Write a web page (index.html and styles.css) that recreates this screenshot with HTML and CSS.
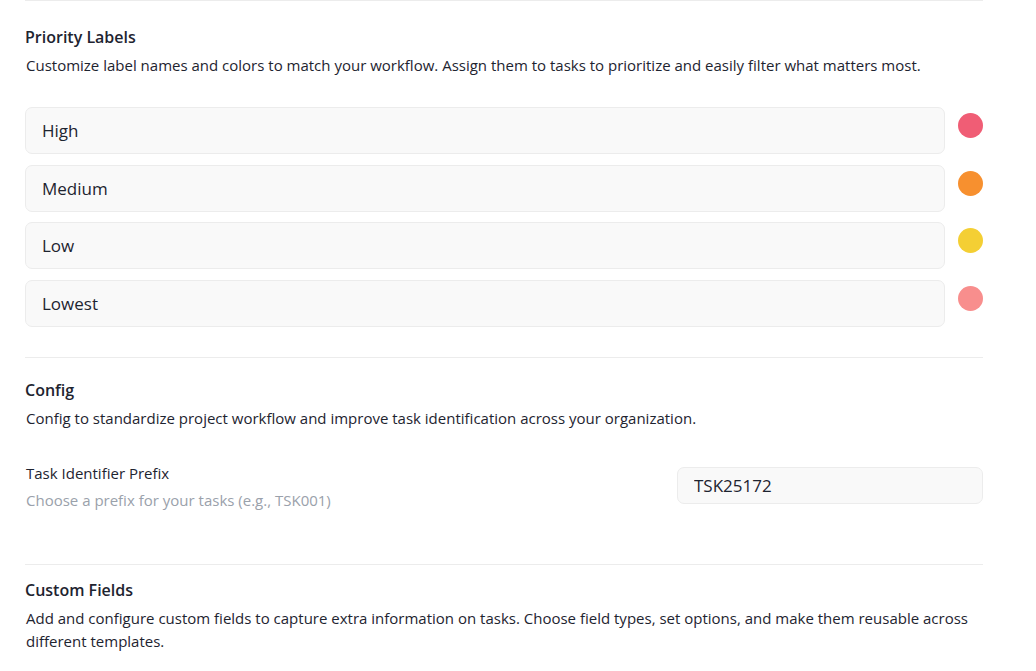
FILE: index.html
```html
<!DOCTYPE html>
<html>
<head>
<meta name="viewport" content="width=device-width, initial-scale=1">
<link rel="stylesheet" href="styles.css">
</head>
<body>

<div class="settings">

  <section class="block block-priority">
    <h2 class="block-title">Priority Labels</h2>
    <p class="block-desc">Customize label names and colors to match your workflow. Assign them to tasks to prioritize and easily filter what matters most.</p>

    <div class="labels">
      <div class="label-row">
        <input class="text-field" type="text" value="High">
        <span class="swatch swatch-high"></span>
      </div>
      <div class="label-row">
        <input class="text-field" type="text" value="Medium">
        <span class="swatch swatch-medium"></span>
      </div>
      <div class="label-row">
        <input class="text-field" type="text" value="Low">
        <span class="swatch swatch-low"></span>
      </div>
      <div class="label-row">
        <input class="text-field" type="text" value="Lowest">
        <span class="swatch swatch-lowest"></span>
      </div>
    </div>
  </section>

  <section class="block block-config">
    <h2 class="block-title">Config</h2>
    <p class="block-desc">Config to standardize project workflow and improve task identification across your organization.</p>

    <div class="field-row">
      <div class="field-info">
        <div class="field-name">Task Identifier Prefix</div>
        <div class="field-hint">Choose a prefix for your tasks (e.g., TSK001)</div>
      </div>
      <input class="text-field prefix-field" type="text" value="TSK25172">
    </div>
  </section>

  <section class="block block-custom">
    <h2 class="block-title">Custom Fields</h2>
    <p class="block-desc">Add and configure custom fields to capture extra information on tasks. Choose field types, set options, and make them reusable across different templates.</p>
  </section>

</div>

</body>
</html>
```

FILE: styles.css
```css
body {
  margin: 0;
  background: #fff;
  color: #1e2430;
  font-family: "Open Sans", "Liberation Sans", sans-serif;
}

.settings {
  width: 958px;
  margin-left: 25px;
}

.block {
  border-top: 1px solid #ececec;
}

.block-priority { padding-top: 24px; }
.block-config { padding-top: 20px; }
.block-custom { padding-top: 13px; }

.block-title {
  margin: 0;
  font-size: 16px;
  font-weight: 600;
  line-height: 24px;
}

.block-desc {
  margin: 5px 0 0 1px;
  font-size: 15px;
  line-height: 23px;
}

.labels {
  display: flex;
  flex-direction: column;
  gap: 10.5px;
  margin-top: 30px;
  padding-bottom: 30px;
}

.label-row {
  display: flex;
  align-items: flex-start;
  gap: 13px;
}

.text-field {
  box-sizing: border-box;
  height: 47px;
  flex: 1;
  padding: 0 16px;
  border: 1px solid #ececec;
  border-radius: 7px;
  background: #f9f9f9;
  color: #1e2430;
  font-family: inherit;
  font-size: 17px;
  outline: none;
}

.swatch {
  width: 25px;
  height: 25px;
  margin-top: 6px;
  border-radius: 50%;
}

.swatch-high { background: #f05d75; }
.swatch-medium { background: #f7902f; }
.swatch-low { background: #f4cf34; }
.swatch-lowest { background: #f88e8d; }

.field-row {
  display: flex;
  justify-content: space-between;
  align-items: flex-start;
  margin-top: 31px;
  padding-bottom: 53px;
}

.field-name {
  font-size: 15px;
  font-weight: 500;
  line-height: 24px;
  margin-left: 1px;
}

.field-hint {
  margin: 4px 0 0 1px;
  color: #9aa1ab;
  font-size: 15px;
  line-height: 22px;
}

.prefix-field {
  flex: none;
  width: 306px;
  height: 37px;
  margin-top: 6px;
}
```
